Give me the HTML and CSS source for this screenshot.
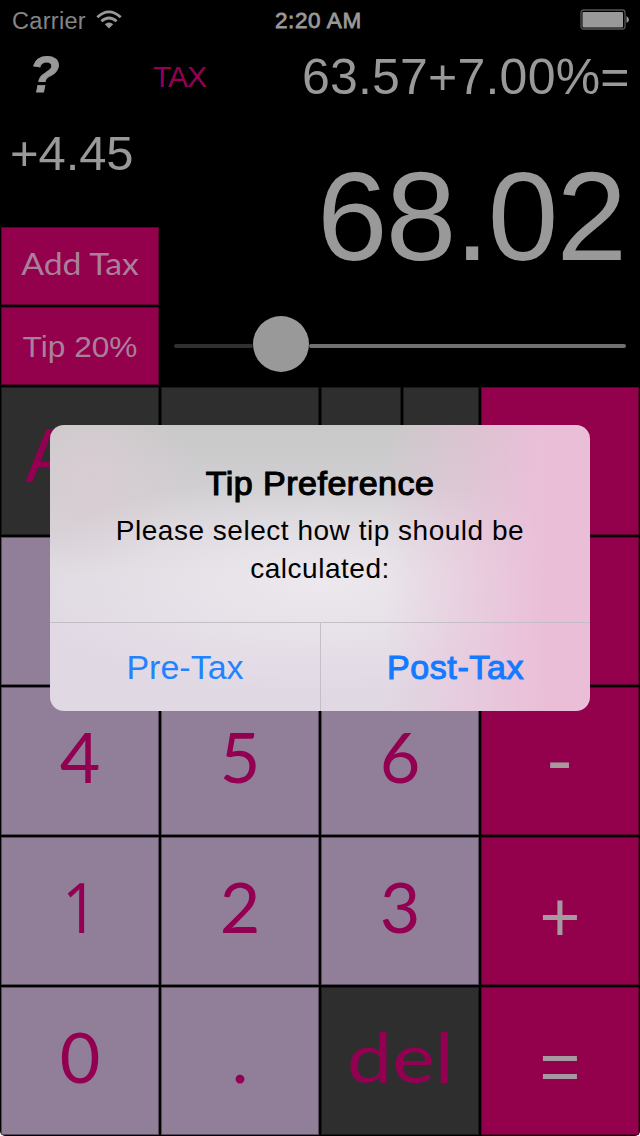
FILE: index.html
```html
<!DOCTYPE html>
<html lang="en">
<head>
<meta charset="utf-8">
<title>Tip Calculator</title>
<link rel="stylesheet" href="styles.css">
</head>
<body>
<main class="screen">
  <header class="status">
    <div class="carrier"><span class="carrier-name">Carrier</span>
      <svg class="wifi" width="26" height="20" viewBox="0 0 26 20" fill="none" stroke="#999" stroke-width="2.8"><path d="M1.3 7.2Q13-3.5 24.7 7.2M5.4 11.3Q13 4.6 20.6 11.3"/><path d="M8.8 14.3Q13 10.8 17.2 14.3L13 18.5Z" fill="#999" stroke="none"/></svg>
    </div>
    <div class="clock">2:20 AM</div>
    <svg class="battery" width="50" height="22" viewBox="0 0 50 22"><rect x="1" y="1" width="44" height="19" rx="2.5" fill="none" stroke="#555" stroke-width="1.3"/><rect x="2.5" y="3" width="40.5" height="15.5" rx="1" fill="#999"/><path d="M46.5 7Q49 8.5 49 10.5Q49 12.5 46.5 14Z" fill="#999"/></svg>
  </header>
  <section class="expression">
    <div class="help">?</div>
    <div class="mode">TAX</div>
    <div class="formula">63.57+7.00%=</div>
  </section>
  <section class="results">
    <div class="left">
      <div class="delta">+4.45</div>
      <button class="action add"><span class="label">Add Tax</span></button>
      <button class="action tip"><span class="label">Tip 20%</span></button>
    </div>
    <div class="right">
      <div class="total">68.02</div>
      <div class="slider"><span class="track low"></span><span class="knob"></span><span class="track high"></span></div>
    </div>
  </section>
  <section class="keypad">
    <button class="key dark"><span class="letter-a">A</span></button>
    <button class="key dark"></button>
    <div class="split"><button class="key dark"></button><button class="key dark"></button></div>
    <button class="key op"></button>
    <button class="key num"></button><button class="key num"></button><button class="key num"></button><button class="key op"></button>
    <button class="key num">4</button><button class="key num">5</button><button class="key num">6</button><button class="key op"><span class="minus">-</span></button>
    <button class="key num"><span class="one">1</span></button><button class="key num">2</button><button class="key num">3</button><button class="key op"><span class="plus">+</span></button>
    <button class="key num">0</button><button class="key num">.</button><button class="key dark"><span class="del">del</span></button><button class="key op"><span class="equals">=</span></button>
  </section>
  <div class="alert" role="dialog">
    <div class="message">
      <h1 class="title">Tip Preference</h1>
      <p class="copy">Please select how tip should be<br>calculated:</p>
    </div>
    <div class="choices">
      <button class="choice">Pre-Tax</button>
      <button class="choice strong">Post-Tax</button>
    </div>
  </div>
</main>
</body>
</html>
```
FILE: styles.css
```css
* { box-sizing: border-box; }
body { margin: 0; background: #fff; }
button { display: block; margin: 0; padding: 0; border: 0; background: none; font: inherit; color: inherit; }
.screen {
  position: relative;
  width: 640px;
  height: 1136px;
  overflow: hidden;
  background: #000;
  color: #999;
  border-radius: 0 0 5px 5px;
  font-family: "Liberation Sans", Arial, sans-serif;
}
.status { display: grid; grid-template-columns: 1fr 100px 1fr; height: 40px; padding: 9px 10px 0 12px; line-height: 24px; }
.carrier { display: flex; gap: 10px; font-size: 23.5px; letter-spacing: .3px; color: #858585; }
.wifi { margin-top: 1px; }
.clock { padding-left: 4px; font-size: 22.5px; white-space: nowrap; letter-spacing: .6px; -webkit-text-stroke: .8px; }
.battery { justify-self: end; }
.expression { display: flex; height: 75px; line-height: 75px; }
.help { width: 152px; padding-left: 29px; font-size: 50px; font-weight: bold; font-style: italic; line-height: 71px; -webkit-text-stroke: .8px; }
.mode { width: 150px; padding-left: 1px; font-size: 30px; color: #930055; letter-spacing: -1px; line-height: 73px; }
.formula { font-size: 50px; letter-spacing: .2px; white-space: nowrap; }
.results { display: flex; height: 272px; }
.left { width: 160px; padding-left: 1px; }
.delta { height: 112px; padding-left: 9px; font-size: 49px; line-height: 77px; letter-spacing: -.1px; }
.action { width: 158px; height: 78px; margin-bottom: 2px; border: 1px solid #5a0030; background: #93004c; color: #a9809b; font-size: 29px; }
.label { display: block; transform: scaleX(1.09); }
.add { font-family: Lato, sans-serif; line-height: 71px; font-size: 31px; }
.add .label { line-height: 64px; margin-bottom: 7px; }
.tip { line-height: 78px; }
.right { flex: 1; }
.total { height: 201px; padding-left: 157px; font-size: 127px; line-height: 203px; letter-spacing: -1.9px; white-space: nowrap; }
.slider { display: flex; align-items: center; padding: 0 14px; height: 56px; }
.track { height: 4px; border-radius: 2px; margin-top: 4px; }
.low { width: 79px; background: #303030; }
.high { flex: 1; background: #707070; }
.knob { width: 56px; height: 56px; border-radius: 50%; background: #999; }
.keypad { display: grid; grid-template-columns: repeat(4, 158px); grid-auto-rows: 148px; gap: 2px; padding: 0 1px; font: 70px/143px Lato, sans-serif; }
.key { display: flex; justify-content: center; width: 100%; height: 148px; border: 1px solid #000; text-align: center; }
.num { background: #917f9a; border-color: #544958; color: #930052; line-height: 136px; }
.dark { background: #2e2e2e; border-color: #191919; color: #930052; }
.op { background: #93004c; border-color: #58002e; color: #a59a9f; font-family: "Liberation Sans", Arial, sans-serif; }
.split { display: grid; grid-template-columns: 80px 76px; gap: 2px; }
.key span { display: block; }
.letter-a { width: 100%; padding-left: 23px; text-align: left; font-size: 74px; line-height: 131px; }
.one { font-family: "Open Sans", sans-serif; transform: scaleX(.9); }
.minus { line-height: 145px; transform: scaleX(1.1); }
.plus, .equals { line-height: 159px; }
.del { line-height: 136px; transform: scaleX(1.15); }
.alert {
  position: absolute;
  left: 50px;
  top: 425px;
  width: 540px;
  height: 286px;
  overflow: hidden;
  border-radius: 14px;
  color: #000;
  background:
    linear-gradient(90deg, transparent 62%, #ebbed8 92%),
    radial-gradient(ellipse 300px 110px at 50% 56%, #ece8ed, transparent),
    radial-gradient(circle at 8% 18%, #d8ccd2, transparent 100px),
    linear-gradient(#c9c9c9 0%, #d0ced1 22%, #dfdae1 52%, #e1d8e4 80%, #e0d8e3);
}
.message { height: 197px; padding-top: 38px; text-align: center; }
.title { margin: 0; font-size: 34px; font-weight: normal; line-height: 40px; letter-spacing: .5px; -webkit-text-stroke: 1.2px; }
.copy { margin: 9px 0 0; font-size: 28px; line-height: 38px; letter-spacing: .52px; white-space: nowrap; }
.choices { display: grid; grid-template-columns: 270px 270px; height: 89px; border-top: 1px solid #c5bec7; }
.choice { color: #2383ff; font-size: 34px; line-height: 89px; }
.strong { border-left: 1px solid #c5bec7; color: #147aff; letter-spacing: .6px; -webkit-text-stroke: 1.1px; }
```
